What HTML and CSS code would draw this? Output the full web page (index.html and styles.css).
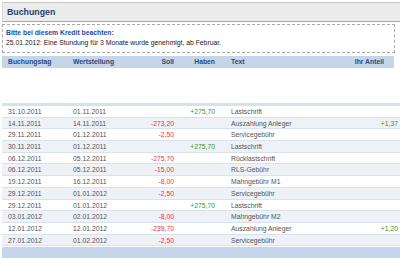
FILE: index.html
```html
<!DOCTYPE html>
<html lang="de">
<head>
    <meta charset="UTF-8">
    <title>Buchungen</title>
    <link rel="stylesheet" href="styles.css">
</head>
<body>

<div class="page">
    <!-- Title bar -->
    <div class="title-bar">Buchungen</div>

    <!-- Notice -->
    <div class="notice">
        <div class="notice-title">Bitte bei diesem Kredit beachten:</div>
        <div class="notice-text">25.01.2012: Eine Stundung für 3 Monate wurde genehmigt, ab Februar.</div>
    </div>

    <!-- Table header -->
    <div class="row head">
        <div>Buchungstag</div>
        <div>Wertstellung</div>
        <div class="num">Soll</div>
        <div class="num">Haben</div>
        <div class="txt">Text</div>
        <div class="num share">Ihr Anteil</div>
    </div>

    <div class="spacer"></div>

    <!-- Bookings -->
    <div class="rows">
        <div class="row"><div>31.10.2011</div><div>01.11.2011</div><div class="num"></div><div class="num plus">+275,70</div><div class="txt">Lastschrift</div><div class="num"></div></div>
        <div class="row"><div>14.11.2011</div><div>14.11.2011</div><div class="num minus">-273,20</div><div class="num"></div><div class="txt">Auszahlung Anleger</div><div class="num plus">+1,37</div></div>
        <div class="row"><div>29.11.2011</div><div>01.12.2011</div><div class="num minus">-2,50</div><div class="num"></div><div class="txt">Servicegebühr</div><div class="num"></div></div>
        <div class="row"><div>30.11.2011</div><div>01.12.2011</div><div class="num"></div><div class="num plus">+275,70</div><div class="txt">Lastschrift</div><div class="num"></div></div>
        <div class="row"><div>06.12.2011</div><div>05.12.2011</div><div class="num minus">-275,70</div><div class="num"></div><div class="txt">Rücklastschrift</div><div class="num"></div></div>
        <div class="row"><div>06.12.2011</div><div>05.12.2011</div><div class="num minus">-15,00</div><div class="num"></div><div class="txt">RLS-Gebühr</div><div class="num"></div></div>
        <div class="row"><div>19.12.2011</div><div>16.12.2011</div><div class="num minus">-8,00</div><div class="num"></div><div class="txt">Mahngebühr M1</div><div class="num"></div></div>
        <div class="row"><div>29.12.2011</div><div>01.01.2012</div><div class="num minus">-2,50</div><div class="num"></div><div class="txt">Servicegebühr</div><div class="num"></div></div>
        <div class="row"><div>29.12.2011</div><div>01.01.2012</div><div class="num"></div><div class="num plus">+275,70</div><div class="txt">Lastschrift</div><div class="num"></div></div>
        <div class="row"><div>03.01.2012</div><div>02.01.2012</div><div class="num minus">-8,00</div><div class="num"></div><div class="txt">Mahngebühr M2</div><div class="num"></div></div>
        <div class="row"><div>12.01.2012</div><div>12.01.2012</div><div class="num minus">-239,70</div><div class="num"></div><div class="txt">Auszahlung Anleger</div><div class="num plus">+1,20</div></div>
        <div class="row"><div>27.01.2012</div><div>01.02.2012</div><div class="num minus">-2,50</div><div class="num"></div><div class="txt">Servicegebühr</div><div class="num"></div></div>
    </div>

    <div class="footer"></div>
</div>

</body>
</html>
```

FILE: styles.css
```css
body {
    margin: 0;
    font-family: "Liberation Sans", Arial, sans-serif;
    font-size: 6.8px;
    color: #555;
    background-color: #fff;
}
.page {
    padding: 2px 0 0 2px;
    height: 256px;
    overflow: hidden;
}
.title-bar {
    height: 18px;
    line-height: 18px;
    padding-left: 4px;
    background-color: #ececec;
    border-top: 1px solid #c8c8c8;
    border-bottom: 1px solid #a8a8a8;
    border-left: 1px solid #d8d8d8;
    font-size: 8.8px;
    font-weight: bold;
    color: #233f6e;
}
.notice {
    width: 385px;
    margin-top: 2px;
    padding: 3px 3px 2px 3px;
    height: 22px;
    border: 1px dashed #aaa;
    line-height: 10px;
}
.notice-title {
    font-weight: bold;
    color: #1c4d9c;
}
.notice-text {
    color: #222;
}
.row {
    display: grid;
    grid-template-columns: 65px 73px 36px 41px 83px 1fr;
    height: 11.7px;
    line-height: 11.7px;
    box-sizing: border-box;
    border-bottom: 1px solid #d8e2ef;
}
.row > div {
    padding-left: 6px;
    white-space: nowrap;
}
.row > .num {
    padding-left: 0;
    padding-right: 2px;
    text-align: right;
}
.row > .txt {
    padding-left: 14px;
}
.row.head {
    width: 392px;
    margin-top: 3px;
    height: 12px;
    line-height: 12px;
    background-color: #c5d5ea;
    border-bottom: none;
    font-weight: bold;
    color: #2b4a7c;
}
.row.head > .share {
    padding-right: 10px;
}
.spacer {
    height: 35px;
    border-bottom: 3px solid #d6e1ef;
}
.rows .row:nth-child(even) {
    background-color: #eef1f6;
}
.minus {
    color: #f0303a;
}
.plus {
    color: #2f9a2f;
}
.footer {
    height: 14px;
    margin-top: 1px;
    background-color: #c5d5ea;
}
```
